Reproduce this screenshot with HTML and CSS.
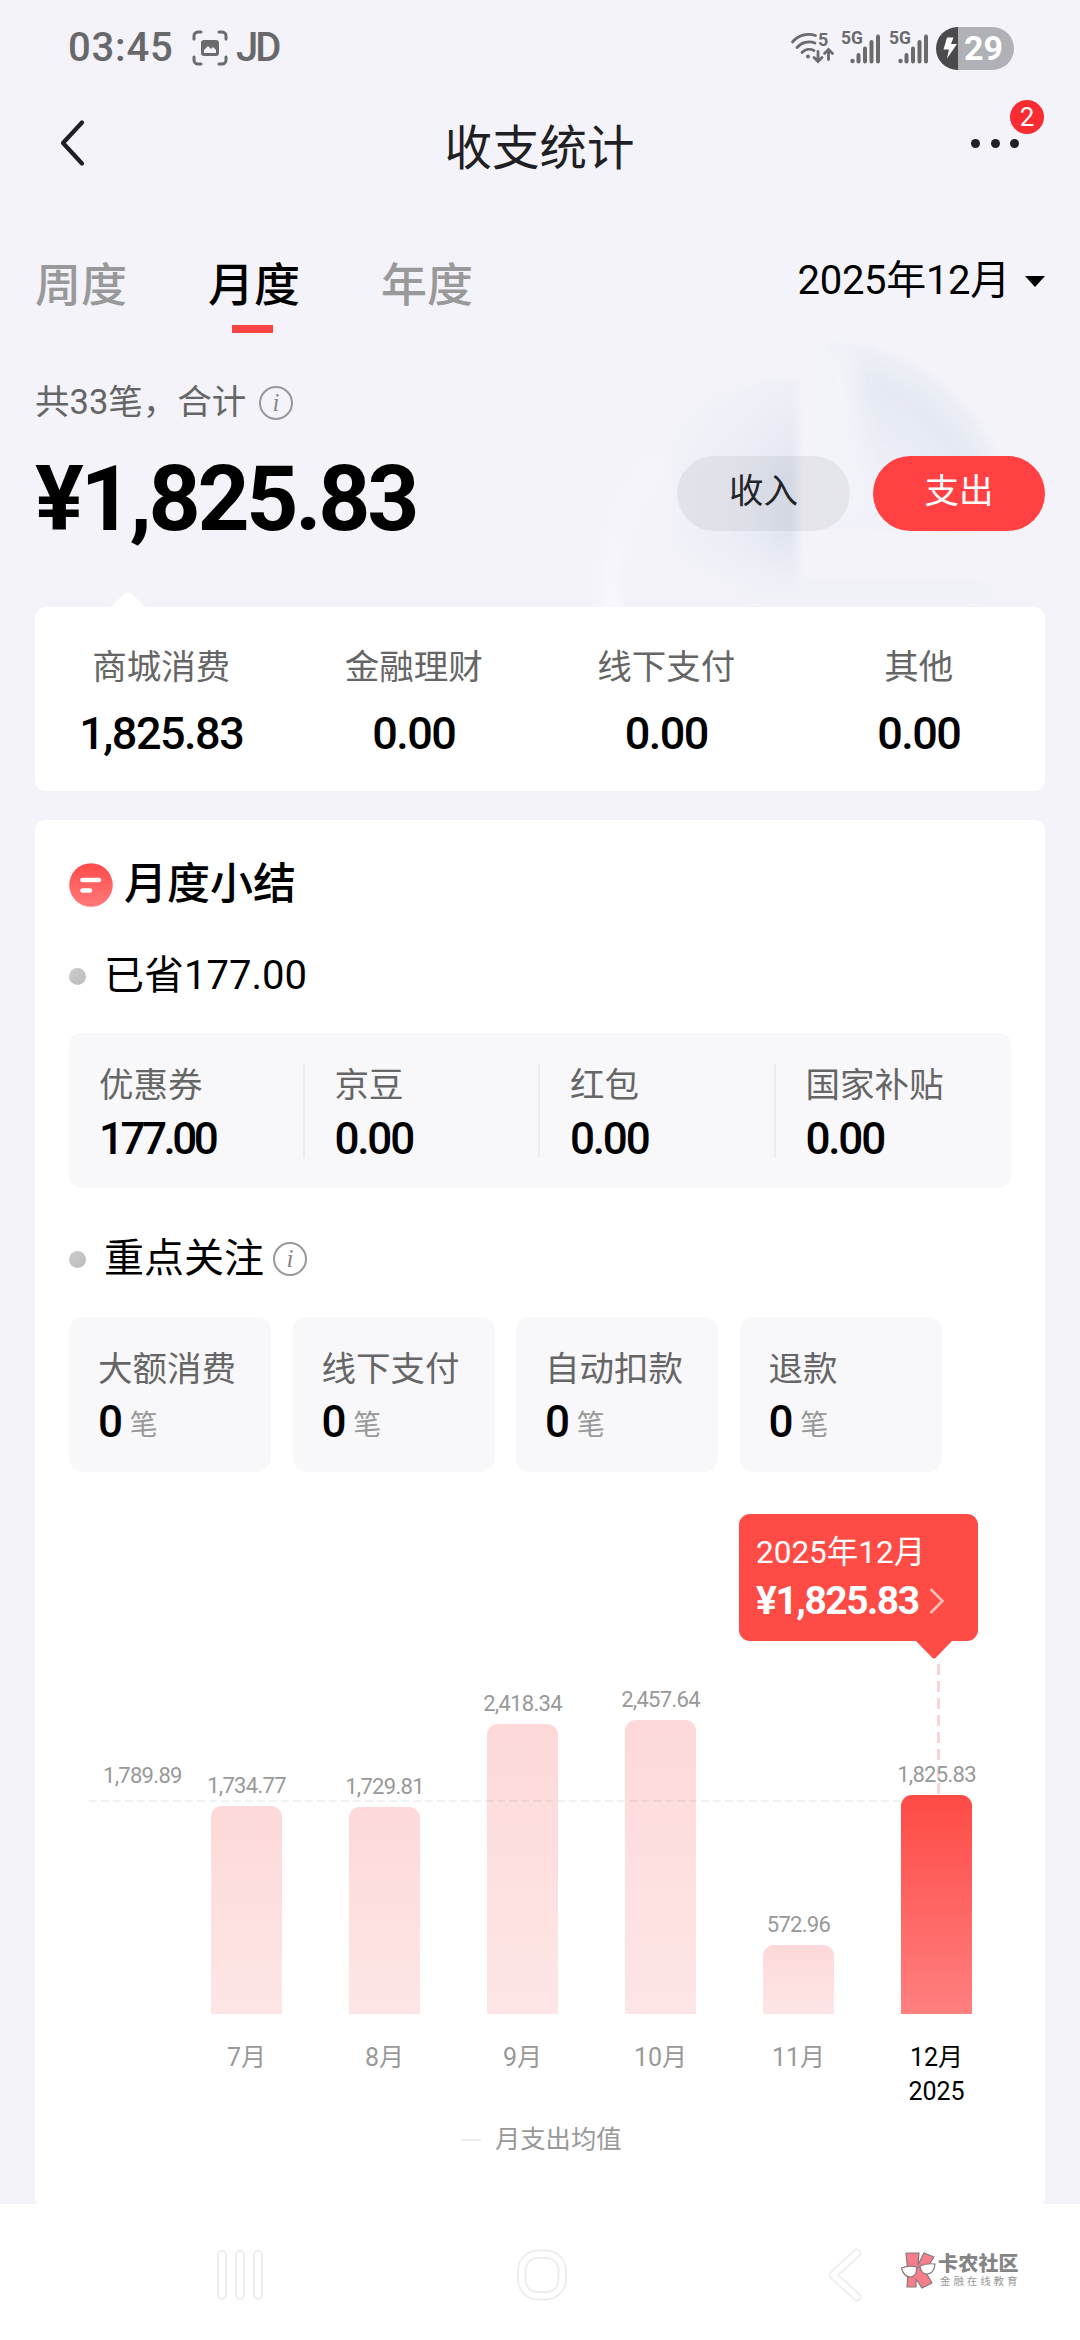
FILE: index.html
```html
<!DOCTYPE html>
<html lang="zh-CN">
<head>
<meta charset="utf-8">
<title>收支统计</title>
<link rel="stylesheet" href="styles.css">
</head>
<body>
<div class="screen">
  <svg class="backdrop" width="520" height="300" viewBox="580 320 520 300" aria-hidden="true">
    <defs>
      <linearGradient id="gLeft" x1="0" x2="1" y1="0" y2="0"><stop offset="0.1" stop-color="#e6e9f4" stop-opacity="0"/><stop offset="0.6" stop-color="#e8ebf5" stop-opacity="0.8"/><stop offset="1" stop-color="#dce1ee"/></linearGradient>
      <linearGradient id="gFade" x1="0" x2="0" y1="0" y2="1"><stop offset="0" stop-color="#fff" stop-opacity="0.15"/><stop offset="0.5" stop-color="#fff"/><stop offset="0.75" stop-color="#fff"/><stop offset="1" stop-color="#fff" stop-opacity="0.1"/></linearGradient>
      <radialGradient id="gRight" gradientUnits="userSpaceOnUse" cx="828" cy="528" r="190"><stop offset="0.3" stop-color="#eef0f9" stop-opacity="0.8"/><stop offset="0.78" stop-color="#dfe4ef"/><stop offset="1" stop-color="#eceff7"/></radialGradient>
      <linearGradient id="gRing" x1="0" x2="0" y1="0" y2="1"><stop offset="0" stop-color="#f7f7fd" stop-opacity="0"/><stop offset="1" stop-color="#f8f8fd"/></linearGradient>
      <mask id="mLeft"><rect x="580" y="375" width="230" height="215" fill="url(#gFade)"/></mask>
      <filter id="soft" x="-20%" y="-20%" width="140%" height="140%"><feGaussianBlur stdDeviation="4"/></filter>
      <filter id="softer" x="-20%" y="-20%" width="140%" height="140%"><feGaussianBlur stdDeviation="10"/></filter>
    </defs>
    <path d="M604 620a200 200 0 0 1 50-170l16 10a190 190 0 0 0-48 160z" fill="url(#gRing)" filter="url(#soft)"/>
    <g mask="url(#mLeft)"><path d="M797 380a140 140 0 0 0-150 95 120 100 0 0 0 150 110z" fill="url(#gLeft)" filter="url(#soft)"/></g>
    <path d="M829 342a190 185 0 0 1 180 186H829z" fill="url(#gRight)" filter="url(#soft)" opacity="0.8"/>
    <path d="M820 345h34l14 175h-48z" fill="#f3f4fa" filter="url(#softer)"/>
    <path d="M740 582h250v18H740z" fill="#ecedf6" opacity="0.6" filter="url(#softer)"/>
  </svg>

  <header class="status">
    <span class="clock">03:45</span>
    <svg class="shot" width="36" height="36" viewBox="0 0 36 36" fill="none" stroke="#6b6b6e" stroke-width="3" stroke-linecap="round"><path d="M2 9V6a4 4 0 0 1 4-4h3M27 2h3a4 4 0 0 1 4 4v3M34 27v3a4 4 0 0 1-4 4h-3M9 34H6a4 4 0 0 1-4-4v-3"/><rect x="9" y="10" width="18" height="16" rx="3" fill="#6b6b6e" stroke="none"/><path d="M12 23v-3l4-4 3 3 2-2 3 3v3z" fill="#f3f3f9" stroke="none"/></svg>
    <span class="carrier">JD</span>
    <span class="status-right">
      <svg width="46" height="42" viewBox="0 -4 46 42" fill="none" stroke="#6b6b6e" stroke-width="2.8" stroke-linecap="round"><path d="M2.500 11a21 21 0 0 1 23-6.500M7 16.500a16 16 0 0 1 18-4.500M12 21.500a10 10 0 0 1 12-2"/><circle cx="18" cy="25.500" r="2" fill="#6b6b6e" stroke="none"/><path d="M28 20.500V30M24 26.500l4 4 4-4M38.500 28.500V19M34.500 22.500l4-4 4 4"/><text x="28" y="15" class="wifi-gen">5</text></svg>
      <svg class="sig" width="42" height="42" viewBox="0 -4 42 42" fill="#6b6b6e"><text x="0" y="13" class="net">5G</text><circle cx="11.500" cy="30" r="2.200"/><rect x="15.500" y="22" width="4" height="10.500" rx="2"/><rect x="22" y="15.500" width="4" height="17" rx="2"/><rect x="28.500" y="9" width="4" height="23.500" rx="2"/><rect x="35" y="3.500" width="4" height="29" rx="2"/></svg>
      <svg class="sig" width="42" height="42" viewBox="0 -4 42 42" fill="#6b6b6e"><text x="0" y="13" class="net">5G</text><circle cx="11.500" cy="30" r="2.200"/><rect x="15.500" y="22" width="4" height="10.500" rx="2"/><rect x="22" y="15.500" width="4" height="17" rx="2"/><rect x="28.500" y="9" width="4" height="23.500" rx="2"/><rect x="35" y="3.500" width="4" height="29" rx="2"/></svg>
      <span class="battery"><svg width="22" height="42" viewBox="0 0 22 42"><path d="M11 10.500h6.500L15 17h6L11 31.500 13 22.500H7.500z" fill="#fff"/></svg><b>29</b></span>
    </span>
  </header>

  <nav class="topbar">
    <svg width="28" height="50" viewBox="0 0 28 50" fill="none" stroke="#1f2023" stroke-width="4.200" stroke-linecap="round" stroke-linejoin="round"><path d="M23 4.500 4 25l19 20.500"/></svg>
    <h1>收支统计</h1>
    <span class="more"><i></i><i></i><i></i><em>2</em></span>
  </nav>

  <div class="tabs">
    <span class="tab">周度</span><span class="tab active">月度</span><span class="tab">年度</span>
    <span class="period">2025年12月<svg width="20" height="11" viewBox="0 0 20 11"><path d="M0 0h20L10 11z"/></svg></span>
  </div>

  <section class="total">
    <div>
      <p class="count">共33笔，合计<svg class="info" width="36" height="36" viewBox="0 0 36 36"><circle cx="18" cy="18" r="16" fill="none" stroke="#999" stroke-width="2"/><text x="18" y="26">i</text></svg></p>
      <p class="amount">¥1,825.83</p>
    </div>
    <div class="switch"><button class="pill">收入</button><button class="pill on">支出</button></div>
  </section>

  <section class="card kinds">
    <svg class="notch" width="36" height="16" viewBox="0 0 36 16"><path d="M0 16 13.500 2.500Q18-1.500 22.500 2.500L36 16z" fill="#fff"/></svg>
    <div><span>商城消费</span><b>1,825.83</b></div>
    <div><span>金融理财</span><b>0.00</b></div>
    <div><span>线下支付</span><b>0.00</b></div>
    <div><span>其他</span><b>0.00</b></div>
  </section>

  <section class="card summary">
    <h2><svg width="44" height="44" viewBox="0 0 44 44"><defs><linearGradient id="gIcon" x1="0" x2="0" y1="0" y2="1"><stop offset="0" stop-color="#ff4a48"/><stop offset="1" stop-color="#ff7b7b"/></linearGradient></defs><circle cx="22" cy="22" r="21.800" fill="url(#gIcon)"/><path d="M13.500 17h16.500M13.500 27.500h7.500" stroke="#fff" stroke-width="4.600" stroke-linecap="round"/></svg>月度小结</h2>

    <h3 class="saved"><i></i>已省177.00</h3>
    <div class="savings">
      <div><span>优惠券</span><b class="tight">177.00</b></div>
      <div><span>京豆</span><b>0.00</b></div>
      <div><span>红包</span><b>0.00</b></div>
      <div><span>国家补贴</span><b>0.00</b></div>
    </div>

    <h3 class="focus"><i></i>重点关注<svg class="info" width="36" height="36" viewBox="0 0 36 36"><circle cx="18" cy="18" r="16" fill="none" stroke="#999" stroke-width="2"/><text x="18" y="26">i</text></svg></h3>
    <div class="tiles">
      <div><span>大额消费</span><p><b>0</b>笔</p></div>
      <div><span>线下支付</span><p><b>0</b>笔</p></div>
      <div><span>自动扣款</span><p><b>0</b>笔</p></div>
      <div><span>退款</span><p><b>0</b>笔</p></div>
    </div>

    <div class="chart">
      <div class="average">1,789.89</div>
      <div class="col"><span>1,734.77</span><i style="height:208px"></i></div>
      <div class="col"><span>1,729.81</span><i style="height:207px"></i></div>
      <div class="col"><span>2,418.34</span><i style="height:290px"></i></div>
      <div class="col"><span>2,457.64</span><i style="height:294px"></i></div>
      <div class="col"><span>572.96</span><i style="height:69px"></i></div>
      <div class="col current"><span>1,825.83</span><i style="height:219px"></i></div>
      <div class="avg-line"></div>
      <div class="pointer"></div>
      <div class="tip">
        <span>2025年12月</span>
        <b>¥1,825.83<svg width="16" height="28" viewBox="0 0 16 28" fill="none" stroke="#fff" stroke-opacity=".65" stroke-width="2.500"><path d="M1.500 2 13.500 14 1.500 26"/></svg></b>
        <svg class="tail" width="38" height="19" viewBox="0 0 38 19"><path d="M0 0h38L21 17.500q-2 2-4 0z" fill="#ff4b45"/></svg>
      </div>
    </div>
    <div class="months">
      <span>7月</span><span>8月</span><span>9月</span><span>10月</span><span>11月</span><span class="now">12月<br>2025</span>
    </div>
    <p class="legend"><i></i>月支出均值</p>
  </section>

  <footer class="navbar">
    <svg width="50" height="54" viewBox="0 0 50 54" fill="#fff" stroke="#eee" stroke-width="2"><rect x="3" y="3" width="8" height="48" rx="4"/><rect x="21" y="3" width="8" height="48" rx="4"/><rect x="39" y="3" width="8" height="48" rx="4"/></svg>
    <svg width="54" height="54" viewBox="0 0 54 54" fill="#fff" stroke="#eee" stroke-width="2"><rect x="3" y="2.500" width="48" height="49" rx="20"/><rect x="10.500" y="10" width="33" height="34" rx="12"/></svg>
    <svg width="40" height="56" viewBox="0 0 40 56" fill="none" stroke-linecap="round" stroke-linejoin="round"><path d="M31 6 7 28l24 22" stroke="#eee" stroke-width="9"/><path d="M31 6 7 28l24 22" stroke="#fff" stroke-width="5.400"/></svg>
    <div class="mark">
      <svg width="36" height="38" viewBox="0 0 36 38" stroke="#85797b" stroke-width="1.200" stroke-linejoin="round"><path d="M6 2h13l-1 12 6-12 10 4-9 14 7 12-10 5-6-9v8H7l1-14z" fill="#f47f8b"/><path d="M1.500 17q8-3 15-1 1 9-6 10-7 0-9-9zM20 15q7-3 15-2-1 10-8 10-6 0-7-8z" fill="#fff"/><path d="M16.500 17l3.500-1.500" fill="none"/></svg>
      <div><b>卡农社区</b><span>金融在线教育</span></div>
    </div>
  </footer>
</div>
</body>
</html>
```
FILE: styles.css
```css
* { box-sizing: border-box; margin: 0; padding: 0; }
body { background: #fff; font-family: Roboto, "Noto Sans CJK SC", sans-serif; line-height: 1.2; color: #000; }
i, em { font-style: normal; display: block; }
svg { display: block; flex: none; }
.screen { position: relative; width: 1080px; height: 2340px; overflow: hidden; background: #f3f3f9; display: flex; flex-direction: column; }
.screen > * { position: relative; flex: none; }
.screen > .backdrop { position: absolute; left: 580px; top: 320px; opacity: .85; }

.status { height: 96px; display: flex; align-items: center; padding: 0 66px 0 68px; color: #68686b; font-weight: 500; font-size: 40px; }
.clock { width: 124px; letter-spacing: .8px; }
.shot { margin-right: 8px; }
.carrier { letter-spacing: -3px; }
.status-right { margin-left: auto; display: flex; align-items: center; }
.wifi-gen { font: 700 18px Roboto; fill: #6b6b6e; stroke: none; }
.net { font: 700 17.500px Roboto; }
.sig { margin-left: 6px; }
.status-right svg:first-child { margin-right: -1px; }
.battery { display: flex; align-items: center; width: 78px; height: 43px; margin-left: 5px; border-radius: 22px; overflow: hidden; background: linear-gradient(90deg, #4a4a4c 22px, #b0b0b7 22px); color: #fff; }
.battery b { font-size: 34px; line-height: 42px; margin-left: 7px; }

.topbar { height: 102px; display: flex; align-items: center; justify-content: space-between; padding: 0 61px 0 59px; color: #1f2023; }
.topbar > svg { margin-top: -9px; }
.topbar h1 { font-size: 47.500px; font-weight: 400; line-height: 60px; margin: 3px 0 0 21px; }
.more { position: relative; display: flex; gap: 10.500px; margin-top: -7px; }
.more i { width: 9px; height: 9px; border-radius: 50%; background: #1f2023; }
.more em { position: absolute; left: 39px; top: -39px; width: 34px; height: 34px; border-radius: 50%; background: #f82c31; color: #fff; font-size: 26px; line-height: 35px; text-align: center; }

.tabs { height: 152px; display: flex; padding: 54px 35px 0; }
.tab { position: relative; width: 92px; margin-right: 81px; height: 82px; font-size: 46px; line-height: 66px; color: #999; font-weight: 500; }
.tab.active { color: #000; }
.tab.active::after { content: ""; display: block; width: 41px; height: 8px; margin: 7px auto 0 24px; background: #f94345; }
.period { margin-left: auto; display: flex; align-items: center; height: 58px; font-size: 40px; gap: 15px; letter-spacing: -.3px; }

.total { height: 257px; padding: 27px 35px 0; display: flex; justify-content: space-between; }
.count { display: flex; align-items: center; height: 52px; font-size: 34.500px; color: #666; }
.info { margin-left: 12px; }
.info text { font: italic 25px "Liberation Serif", serif; fill: #888; text-anchor: middle; }
.amount { font-size: 91px; font-weight: 700; line-height: 100px; margin-top: 20px; letter-spacing: -3.300px; }
.switch { display: flex; gap: 23px; padding-top: 79px; }
.pill { width: 173px; height: 75px; border: 0; border-radius: 38px; background: rgba(0, 0, 0, .055); font: inherit; font-size: 34.500px; line-height: 70px; padding-bottom: 5px; color: #222428; }
.pill.on { width: 172px; background: #ff4144; color: #fff; }

.card { background: #fff; border-radius: 11px; margin: 0 35px; }
.kinds { height: 184px; display: grid; grid-template-columns: repeat(4, 1fr); text-align: center; padding-top: 36px; }
.kinds .notch { position: absolute; left: 75px; top: -15px; }
.kinds span, .kinds b { display: block; }
.kinds span { font-size: 34.500px; line-height: 48px; color: #666; }
.kinds b { font-size: 45px; font-weight: 500; line-height: 54px; margin-top: 16px; letter-spacing: -1.500px; }

.summary { margin-top: 29px; height: 1384px; padding: 36px 34px 0; border-radius: 11px 11px 4px 4px; }
h2 { display: flex; align-items: center; gap: 11px; height: 58px; font-size: 43px; font-weight: 500; }
h3 { display: flex; align-items: center; height: 52px; font-size: 40px; font-weight: 400; }
h3 i { width: 17px; height: 17px; border-radius: 50%; background: linear-gradient(135deg, #ccc, #bcbcbc); margin-right: 18px; }
.saved { margin-top: 36px; }
.focus { margin-top: 45px; }
.focus .info { margin-left: 8px; }
.savings { height: 155px; margin-top: 31px; border-radius: 12px; background: #f8f8fb; display: flex; padding: 31px 0; }
.savings div { width: 235.500px; padding-left: 30px; border-right: 2px solid #ededf0; height: 94px; }
.savings div:last-child { border: 0; }
.savings span, .savings b { display: block; }
.savings span, .tiles span { font-size: 34.500px; line-height: 42px; color: #666; white-space: nowrap; }
.savings b, .tiles b { font-size: 44px; font-weight: 500; line-height: 50px; letter-spacing: -2.200px; }
.savings b { margin-top: 8px; }
.savings .tight { letter-spacing: -3.500px; }
.tiles { display: flex; gap: 21.500px; margin-top: 32px; }
.tiles div { width: 202px; height: 155px; padding: 31px 0 0 29px; border-radius: 14px; background: #f8f8fb; }
.tiles span { display: block; }
.tiles p { display: flex; align-items: flex-start; line-height: 57px; margin-top: 7px; font-size: 28px; color: #999; }
.tiles b { color: #000; margin-right: 9px; }

.chart { position: relative; height: 542px; display: grid; grid-template-columns: 108.500px repeat(6, 138px); align-items: end; }
.average, .col span { font-size: 22px; line-height: 26px; color: #999; letter-spacing: -.7px; }
.average { height: 251px; padding-left: 34px; }
.col { display: flex; flex-direction: column; align-items: center; }
.col span { margin-bottom: 7px; position: relative; z-index: 2; }
.col i { width: 70.500px; border-radius: 11px 11px 0 0; background: linear-gradient(#fdd9d9, #fee6e6); }
.col.current i { background: linear-gradient(#ff4b46, #ff8080); position: relative; z-index: 2; }
.avg-line { position: absolute; left: 20px; top: 327.500px; width: 812px; height: 2px; background: repeating-linear-gradient(90deg, rgba(0,0,0,.05) 0 8px, transparent 8px 12px); }
.pointer { position: absolute; left: 867.500px; top: 192px; width: 3px; height: 131px; background: repeating-linear-gradient(#fbd6d7 0 11px, transparent 11px 17px); }
.tip { position: absolute; left: 670px; top: 42px; width: 239px; height: 127px; border-radius: 11px; background: #ff4b45; color: #fff; padding: 18px 0 0 17px; }
.tip span { display: block; font-size: 31.500px; line-height: 42px; }
.tip b { display: flex; align-items: center; gap: 10px; font-size: 39px; line-height: 46px; margin-top: 4px; letter-spacing: -1.500px; }
.tip .tail { position: absolute; left: 176px; top: 126px; }
.months { display: grid; grid-template-columns: repeat(6, 138px); margin-left: 108.500px; height: 108px; padding-top: 27px; text-align: center; font-size: 25px; line-height: 34px; color: #999; }
.months .now { color: #000; }
.legend { display: flex; align-items: center; margin-left: 392px; height: 36px; font-size: 25.300px; color: #999; }
.legend i { width: 20px; height: 2px; background: #eee; margin-right: 14px; }

.navbar { height: 136px; background: #fff; display: flex; align-items: center; padding: 5px 62px 0 215px; }
.navbar > svg:nth-child(2) { margin-left: 250px; }
.navbar > svg:nth-child(3) { margin-left: 257px; }
.mark { display: flex; align-items: center; margin: -9px 0 0 34px; color: #858585; }
.mark > svg { margin-right: 2px; }
.mark b { display: block; font-size: 20px; line-height: 22px; font-weight: 900; letter-spacing: .2px; white-space: nowrap; }
.mark span { display: block; font-size: 10.500px; line-height: 13px; letter-spacing: 2.900px; margin-left: 2px; color: #999; white-space: nowrap; }
```
